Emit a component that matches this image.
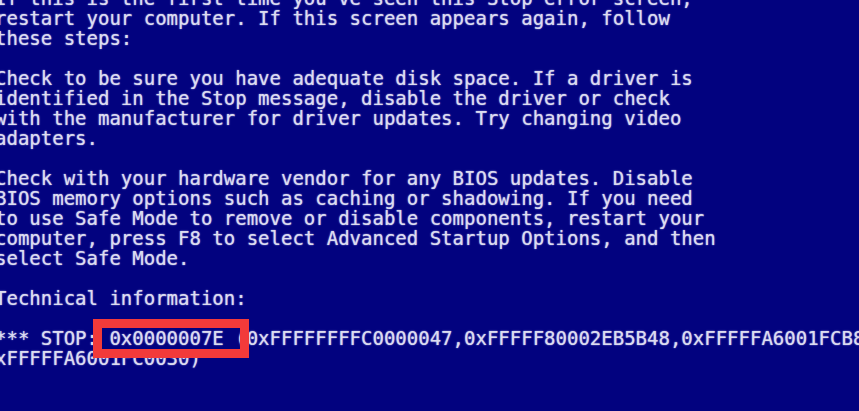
import React from "react";

const lines = [
  "If this is the first time you've seen this Stop error screen,",
  "restart your computer. If this screen appears again, follow",
  "these steps:",
  "",
  "Check to be sure you have adequate disk space. If a driver is",
  "identified in the Stop message, disable the driver or check",
  "with the manufacturer for driver updates. Try changing video",
  "adapters.",
  "",
  "Check with your hardware vendor for any BIOS updates. Disable",
  "BIOS memory options such as caching or shadowing. If you need",
  "to use Safe Mode to remove or disable components, restart your",
  "computer, press F8 to select Advanced Startup Options, and then",
  "select Safe Mode.",
  "",
  "Technical information:",
  "",
  "*** STOP: 0x0000007E (0xFFFFFFFFC0000047,0xFFFFF80002EB5B48,0xFFFFFA6001FCB828,0",
  "xFFFFFA6001FC0030)",
];

export default function App() {
  return (
    <div className="relative w-[859px] h-[411px] overflow-hidden bg-[#02027f]">
      <pre
        className="-ml-[5px] -mt-[12px] text-[19px] leading-[20px] text-[#dcdcf0] whitespace-pre [text-shadow:0_0_1.5px_rgba(220,220,255,0.9)]"
        style={{ fontFamily: '"DejaVu Sans Mono", "Liberation Mono", monospace' }}
      >
        {lines.map((l, i) => (
          <div key={i} className="h-[20px]">
            {l}
          </div>
        ))}
      </pre>
      <div className="absolute left-[93px] top-[319px] w-[156px] h-[39px] border-[9px] border-[#f23a3a]" />
    </div>
  );
}
